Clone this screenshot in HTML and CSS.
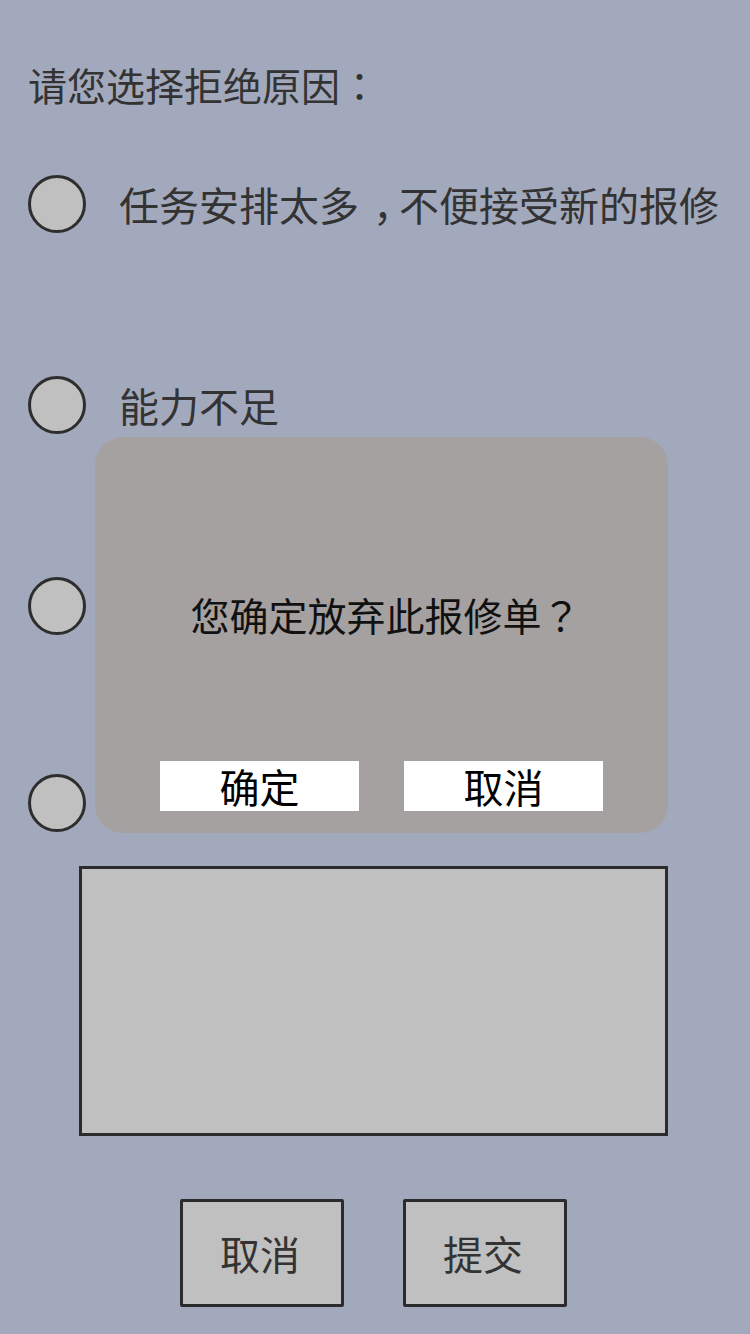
FILE: index.html
```html
<!DOCTYPE html>
<html lang="zh-CN">
<head>
  <meta charset="UTF-8">
  <meta name="viewport" content="width=device-width, initial-scale=1.0">
  <title>拒绝原因</title>
  <link rel="stylesheet" href="styles.css">
</head>
<body>
  <div class="page">
    <h1 class="title">请您选择拒绝原因<span class="punct" lang="zh-TW">：</span></h1>

    <div class="options">
      <label class="option"><span class="radio"></span><span class="option-text">任务安排太多<span class="comma">，</span>不便接受新的报修</span></label>
      <label class="option"><span class="radio"></span><span class="option-text">能力不足</span></label>
      <label class="option"><span class="radio"></span><span class="option-text"></span></label>
      <label class="option"><span class="radio"></span><span class="option-text"></span></label>
    </div>

    <div class="reason-box"></div>

    <div class="actions">
      <button class="action-btn">取消</button>
      <button class="action-btn">提交</button>
    </div>

    <div class="dialog">
      <p class="dialog-msg">您确定放弃此报修单<span class="punct" lang="zh-TW">？</span></p>
      <div class="dialog-btns">
        <button class="dialog-btn">确定</button>
        <button class="dialog-btn">取消</button>
      </div>
    </div>
  </div>
</body>
</html>
```

FILE: styles.css
```css
html, body {
  margin: 0;
  padding: 0;
}
body {
  width: 750px;
  height: 1334px;
  background: #a3a9bc;
  font-family: "Noto Sans CJK SC", "Noto Sans", sans-serif;
  color: #333;
  overflow: hidden;
}
/* full-width punctuation sits centred in its cell in the design */
.punct {
  font-family: "Noto Sans CJK TC", "Noto Sans CJK SC", sans-serif;
}
.comma {
  padding-left: 14px;
  letter-spacing: -14px;
}
.page {
  position: relative;
  height: 100%;
  padding: 65px 0 0 28px;
  box-sizing: border-box;
}
.title {
  margin: 0;
  font-size: 39px;
  font-weight: normal;
  line-height: 39px;
}
.options {
  display: flex;
  flex-direction: column;
  gap: 143px;
  margin-top: 71px;
}
.option {
  display: flex;
  align-items: center;
  gap: 33px;
  height: 58px;
}
.option:last-child {
  margin-top: -4px;
}
.radio {
  width: 58px;
  height: 58px;
  box-sizing: border-box;
  border: 3px solid #2e2e2e;
  border-radius: 50%;
  background: #c0c0c0;
  flex-shrink: 0;
}
.option-text {
  font-size: 40px;
  line-height: 40px;
  white-space: nowrap;
}
.reason-box {
  margin: 34px 0 0 51px;
  width: 589px;
  height: 270px;
  box-sizing: border-box;
  border: 3px solid #2b2b2e;
  background: #c0c0c0;
}
.actions {
  display: flex;
  gap: 59px;
  margin: 63px 0 0 152px;
}
.action-btn {
  width: 164px;
  height: 108px;
  box-sizing: border-box;
  border: 3px solid #2b2b2b;
  border-radius: 2px;
  background: #c0c0c0;
  font-family: inherit;
  font-size: 40px;
  color: #333;
  padding: 0 4px 0 0;
}
.dialog {
  position: absolute;
  left: 95px;
  top: 437px;
  width: 573px;
  height: 396px;
  border-radius: 28px;
  background: #a5a1a0;
  display: flex;
  flex-direction: column;
  align-items: center;
}
.dialog-msg {
  margin: 157px 0 0 8px;
  font-size: 39px;
  line-height: 40px;
  color: #111;
}
.dialog-btns {
  display: flex;
  gap: 45px;
  margin-top: auto;
  margin-bottom: 22px;
}
.dialog-btn {
  width: 199px;
  height: 50px;
  border: none;
  background: #fff;
  font-family: inherit;
  font-size: 40px;
  line-height: 50px;
  color: #000;
  padding: 0;
}
```
